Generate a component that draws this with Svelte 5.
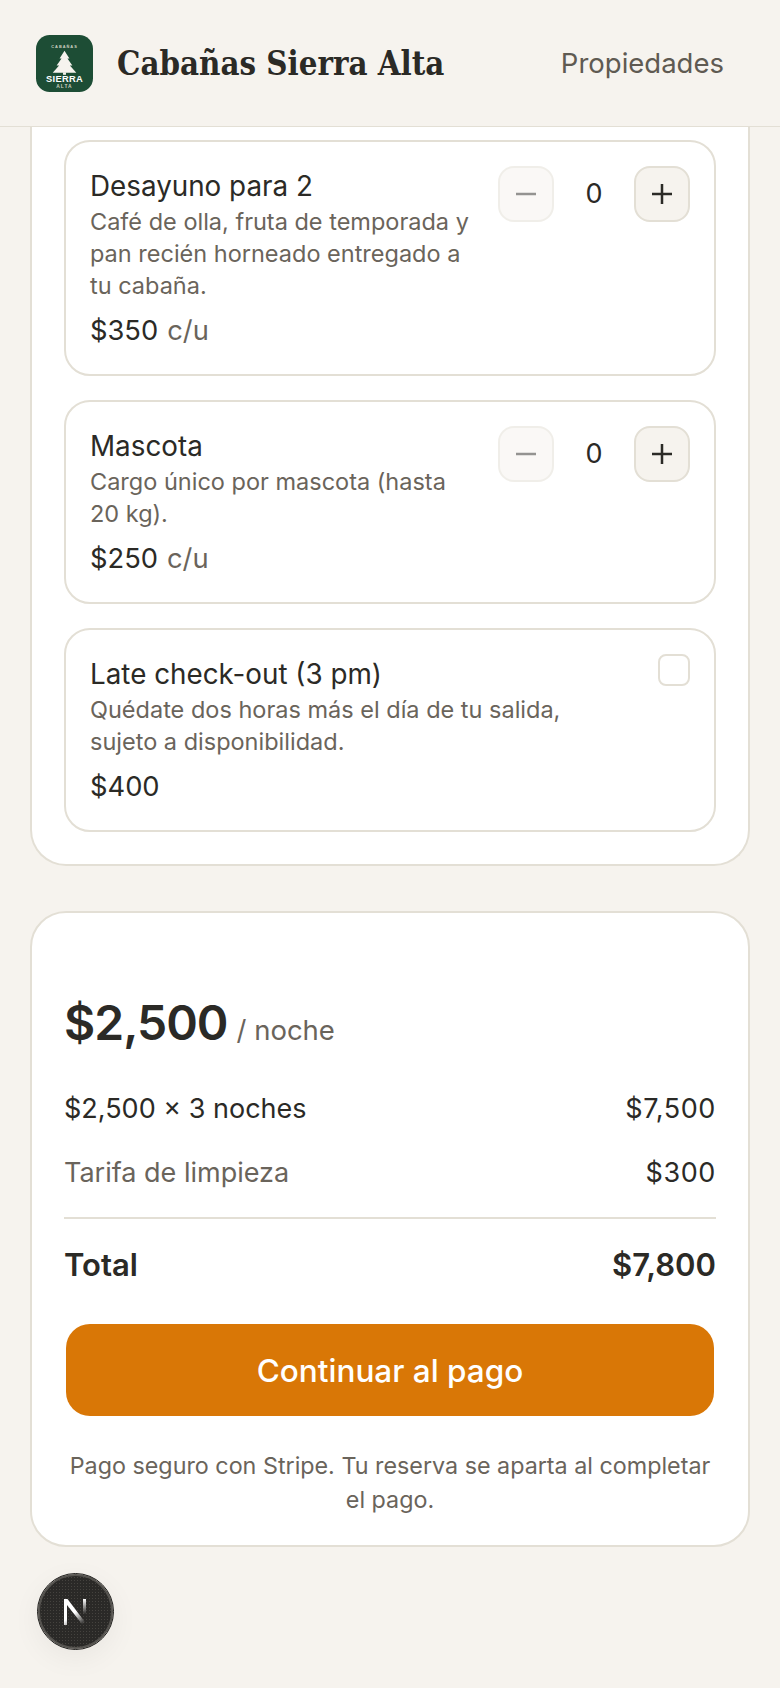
<script>
  const extras = [
    { name: 'Desayuno para 2', desc: 'Café de olla, fruta de temporada y pan recién horneado entregado a tu cabaña.', price: '$350', unit: 'c/u', qty: 0 },
    { name: 'Mascota', desc: 'Cargo único por mascota (hasta 20 kg).', price: '$250', unit: 'c/u', qty: 0 },
    { name: 'Late check-out (3 pm)', desc: 'Quédate dos horas más el día de tu salida, sujeto a disponibilidad.', price: '$400' }
  ];
</script>

<header class="topbar">
  <div class="brand">
    <svg class="logo" viewBox="0 0 58 58" aria-hidden="true">
      <rect width="58" height="58" rx="14" fill="#1d4d35" />
      <text x="29" y="13" class="logo-small">CABAÑAS</text>
      <path d="M29 16 L34 24 H32 L37 31 H34.500 L41 38.500 H17 L23.500 31 H21 L26 24 H24 Z" fill="#f6f3ee" />
      <rect x="27.500" y="38" width="3" height="2.500" fill="#f6f3ee" />
      <text x="29" y="47.500" class="logo-big">SIERRA</text>
      <text x="29" y="54" class="logo-small alt">ALTA</text>
    </svg>
    <span class="brand-name">Cabañas Sierra Alta</span>
  </div>
  <a class="nav-link" href="#propiedades">Propiedades</a>
</header>

<main>
  <section class="card extras">
    {#each extras as extra}
      <article class="extra">
        <div class="extra-info">
          <h3>{extra.name}</h3>
          <p class="desc">{extra.desc}</p>
          <p class="price">{extra.price}{#if extra.unit}<span class="unit">{extra.unit}</span>{/if}</p>
        </div>
        {#if extra.unit}
          <div class="stepper">
            <button class="step" disabled aria-label="Quitar">
              <svg viewBox="0 0 24 24"><path d="M2 12h20" /></svg>
            </button>
            <span class="qty">{extra.qty}</span>
            <button class="step" aria-label="Agregar">
              <svg viewBox="0 0 24 24"><path d="M2 12h20M12 2v20" /></svg>
            </button>
          </div>
        {:else}
          <input class="check" type="checkbox" />
        {/if}
      </article>
    {/each}
  </section>

  <section class="card summary">
    <div class="nightly"><strong>$2,500</strong><span>/ noche</span></div>
    <div class="row first"><span>$2,500 × 3 noches</span><span class="amount">$7,500</span></div>
    <div class="row muted"><span>Tarifa de limpieza</span><span class="amount dark">$300</span></div>
    <div class="row total"><span>Total</span><span>$7,800</span></div>
    <button class="pay">Continuar al pago</button>
    <p class="note">Pago seguro con Stripe. Tu reserva se aparta al completar el pago.</p>
  </section>
</main>

<div class="next-badge" aria-hidden="true">
  <svg viewBox="0 0 26 28" width="26" height="28">
    <defs>
      <linearGradient id="fade" x1="0" y1="0" x2="0.7" y2="1">
        <stop offset="0.55" stop-color="#fff" />
        <stop offset="1" stop-color="#fff" stop-opacity="0" />
      </linearGradient>
      <linearGradient id="fade2" x1="0" y1="0" x2="0" y2="1">
        <stop offset="0" stop-color="#fff" />
        <stop offset="0.9" stop-color="#fff" stop-opacity="0" />
      </linearGradient>
    </defs>
    <path d="M1 1h3.500L25 28h-4.500L4 7v20H1z" fill="url(#fade)" />
    <rect x="20" y="1" width="3" height="17" fill="url(#fade2)" />
  </svg>
</div>

<style>
  :global(body) {
    margin: 0;
    background: #f6f3ee;
    color: #2b2a26;
    font-family: Inter, 'Noto Sans', sans-serif;
    height: 1688px;
    overflow: hidden;
  }

  .topbar {
    height: 127px;
    box-sizing: border-box;
    border-bottom: 1px solid #e3dfd5;
    background: #f6f3ee;
    padding: 0 56px 0 36px;
    display: flex;
    align-items: center;
    justify-content: space-between;
  }

  .brand {
    display: flex;
    align-items: center;
    gap: 24px;
  }

  .logo {
    width: 57px;
    height: 57px;
    display: block;
  }

  .logo-small {
    font: 700 4px 'Liberation Sans', sans-serif;
    letter-spacing: 1px;
    fill: #cfd2c2;
    text-anchor: middle;
  }

  .logo-small.alt {
    font-size: 5px;
  }

  .logo-big {
    font: 700 9.500px 'Liberation Sans', sans-serif;
    letter-spacing: 0.3px;
    fill: #fff;
    text-anchor: middle;
  }

  .brand-name {
    font-family: 'DejaVu Serif Condensed', 'Liberation Serif', serif;
    font-weight: 700;
    font-size: 32.700px;
    color: #2b2a26;
  }

  .nav-link {
    font-size: 27.500px;
    color: #5f5a52;
    text-decoration: none;
  }

  main {
    padding: 0 30px;
    display: flex;
    flex-direction: column;
    gap: 45px;
  }

  .card {
    background: #fff;
    border: 2px solid #e3dfd5;
    border-radius: 36px;
    box-sizing: border-box;
    padding: 32px;
  }

  .extras {
    border-top: none;
    border-radius: 0 0 36px 36px;
    padding-top: 13px;
    padding-bottom: 32px;
    display: flex;
    flex-direction: column;
    gap: 24px;
  }

  .extra {
    border: 2px solid #e3dfd5;
    border-radius: 26px;
    padding: 24px;
    display: flex;
    justify-content: space-between;
    gap: 24px;
  }

  .extra-info {
    flex: 1;
  }

  h3 {
    margin: 0;
    font-size: 27.800px;
    font-weight: 400;
    line-height: 40px;
  }

  .desc {
    margin: 0;
    font-size: 23.500px;
    line-height: 32px;
    color: #6a645b;
  }

  .price {
    margin: 10px 0 0;
    font-size: 27.300px;
    line-height: 38px;
  }

  .unit {
    color: #6a645b;
    margin-left: 9px;
  }

  .stepper {
    display: flex;
    align-items: flex-start;
    flex: none;
    width: 192px;
    justify-content: space-between;
  }

  .step {
    width: 56px;
    height: 56px;
    border: 2px solid #e3dfd5;
    border-radius: 16px;
    background: #f6f3ee;
    padding: 14px;
    display: flex;
  }

  .step:disabled {
    opacity: 0.5;
  }

  .step svg {
    width: 24px;
    height: 24px;
    fill: none;
    stroke: #2b2a26;
    stroke-width: 2.500;
  }

  .qty {
    font-size: 27px;
    line-height: 56px;
  }

  .check {
    appearance: none;
    width: 32px;
    height: 32px;
    margin: 0;
    border: 2px solid #e3dfd5;
    border-radius: 8px;
    background: #fff;
    flex: none;
  }

  .summary {
    padding-top: 80px;
    height: 636px;
  }

  .nightly {
    display: flex;
    align-items: baseline;
    gap: 9px;
  }

  .nightly strong {
    font-size: 48px;
    font-weight: 600;
    line-height: 60px;
    letter-spacing: -1px;
  }

  .nightly span {
    font-size: 27.500px;
    color: #6a645b;
  }

  .row {
    display: flex;
    justify-content: space-between;
    font-size: 27px;
    line-height: 40px;
    margin-top: 24px;
  }

  .row.first {
    margin-top: 36px;
  }

  .amount {
    letter-spacing: 0.6px;
  }

  .muted {
    color: #6a645b;
  }

  .dark {
    color: #2b2a26;
  }

  .total {
    border-top: 2px solid #e3dfd5;
    font-weight: 600;
    font-size: 31px;
    padding-top: 26px;
  }

  .pay {
    display: block;
    width: calc(100% - 4px);
    height: 92px;
    margin: 39px 2px 0;
    border: none;
    border-radius: 24px;
    background: #d97706;
    color: #fff;
    font: 500 31.500px Inter, 'Noto Sans', sans-serif;
  }

  .note {
    margin: 33px 0 0;
    text-align: center;
    font-size: 23.300px;
    line-height: 34px;
    color: #6a645b;
  }

  .next-badge {
    position: fixed;
    left: 38px;
    top: 1574px;
    width: 75px;
    height: 75px;
    box-sizing: border-box;
    border-radius: 50%;
    background: #2a2927 radial-gradient(circle, #45433f 0.7px, transparent 0.8px) 0 0 / 3px 3px;
    border: 2px solid #55534f;
    outline: 1px solid #1a1917;
    display: flex;
    align-items: center;
    justify-content: center;
    box-shadow: 0 8px 30px rgba(0, 0, 0, 0.06);
  }
</style>
